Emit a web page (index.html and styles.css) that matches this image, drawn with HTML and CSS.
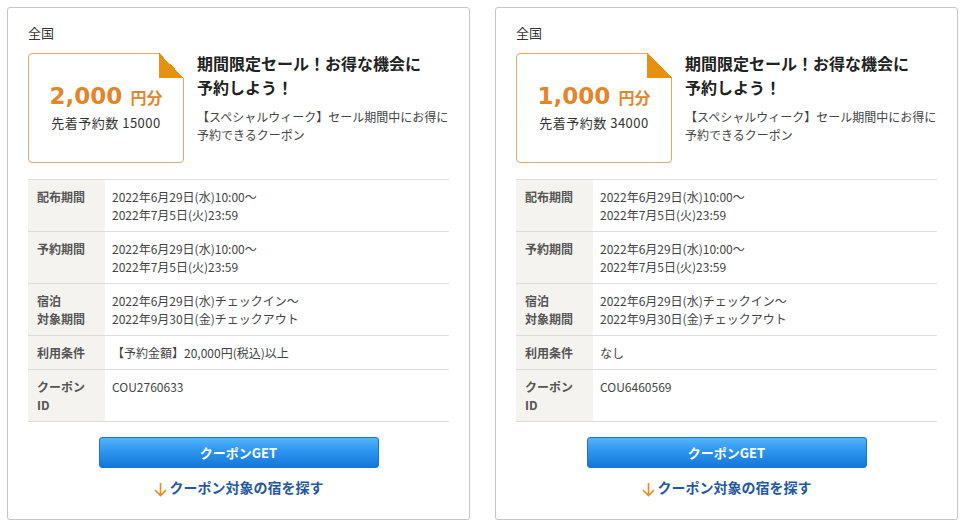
FILE: index.html
```html
<!DOCTYPE html>
<html lang="ja">
<head>
<meta charset="utf-8">
<link rel="stylesheet" href="styles.css">
</head>
<body>
<div class="cards">
  <div class="card">
    <div class="area">全国</div>
    <div class="head">
      <div class="coupon">
        <div class="amount"><span class="num">2,000</span><span class="unit">円分</span></div>
        <div class="count">先着予約数 15000</div>
      </div>
      <div class="info">
        <div class="title">期間限定セール！お得な機会に<br>予約しよう！</div>
        <div class="desc">【スペシャルウィーク】セール期間中にお得に予約できるクーポン</div>
      </div>
    </div>
    <table class="terms">
      <tr><th>配布期間</th><td>2022年6月29日(水)10:00～<br>2022年7月5日(火)23:59</td></tr>
      <tr><th>予約期間</th><td>2022年6月29日(水)10:00～<br>2022年7月5日(火)23:59</td></tr>
      <tr><th>宿泊<br>対象期間</th><td>2022年6月29日(水)チェックイン～<br>2022年9月30日(金)チェックアウト</td></tr>
      <tr><th>利用条件</th><td>【予約金額】20,000円(税込)以上</td></tr>
      <tr><th>クーポン<br>ID</th><td>COU2760633</td></tr>
    </table>
    <div class="actions">
      <button class="get">クーポンGET</button>
      <a class="search" href="#"><svg class="arrow" width="13" height="15" viewBox="0 0 13 15"><path d="M6.5 1v12.5M1 8l5.5 5.5L12 8" fill="none" stroke="#ec8a1d" stroke-width="1.6"/></svg>クーポン対象の宿を探す</a>
    </div>
  </div>
  <div class="card">
    <div class="area">全国</div>
    <div class="head">
      <div class="coupon">
        <div class="amount"><span class="num">1,000</span><span class="unit">円分</span></div>
        <div class="count">先着予約数 34000</div>
      </div>
      <div class="info">
        <div class="title">期間限定セール！お得な機会に<br>予約しよう！</div>
        <div class="desc">【スペシャルウィーク】セール期間中にお得に予約できるクーポン</div>
      </div>
    </div>
    <table class="terms">
      <tr><th>配布期間</th><td>2022年6月29日(水)10:00～<br>2022年7月5日(火)23:59</td></tr>
      <tr><th>予約期間</th><td>2022年6月29日(水)10:00～<br>2022年7月5日(火)23:59</td></tr>
      <tr><th>宿泊<br>対象期間</th><td>2022年6月29日(水)チェックイン～<br>2022年9月30日(金)チェックアウト</td></tr>
      <tr><th>利用条件</th><td>なし</td></tr>
      <tr><th>クーポン<br>ID</th><td>COU6460569</td></tr>
    </table>
    <div class="actions">
      <button class="get">クーポンGET</button>
      <a class="search" href="#"><svg class="arrow" width="13" height="15" viewBox="0 0 13 15"><path d="M6.5 1v12.5M1 8l5.5 5.5L12 8" fill="none" stroke="#ec8a1d" stroke-width="1.6"/></svg>クーポン対象の宿を探す</a>
    </div>
  </div>
</div>
</body>
</html>
```

FILE: styles.css
```css
* { box-sizing: border-box; }
html, body { margin: 0; background: #fff; }
body {
  padding: 7px 0 0 7px;
  font-family: "Noto Sans CJK JP", "Noto Sans", sans-serif;
  color: #333;
}
.cards { display: flex; gap: 25px; }
.card {
  width: 463px;
  height: 513px;
  border: 1px solid #c6c6c6;
  border-radius: 3px;
  padding: 16px 20px 0 20px;
  box-shadow: 0 1px 1px rgba(0,0,0,0.08);
}
.area { font-size: 13px; line-height: 18px; color: #333; height: 29px; }
.head { display: flex; gap: 13px; }
.coupon {
  position: relative;
  width: 156px;
  height: 110px;
  flex: none;
  border: 1px solid #dcaa66;
  border-radius: 4px;
  display: flex;
  flex-direction: column;
  align-items: center;
  padding-top: 26px;
}
.coupon::before {
  content: "";
  position: absolute;
  top: -1px;
  right: -1px;
  width: 25px;
  height: 25px;
  background: linear-gradient(to bottom left, #fff 50%, #e8900f 50%);
}
.amount { color: #e3862a; font-weight: bold; line-height: 32px; white-space: nowrap; }
.num { font-family: "DejaVu Sans", "Noto Sans", sans-serif; font-size: 23px; }
.unit { font-size: 16px; margin-left: 8px; }
.count { font-size: 13px; line-height: 18px; color: #333; letter-spacing: 0.5px; margin-top: 1px; }
.info { width: 256px; margin-top: -2px; }
.title { font-size: 16px; font-weight: bold; line-height: 24px; color: #222; margin-bottom: 9px; }
.desc { font-size: 12px; line-height: 18px; color: #444; }
.terms {
  margin-top: 16px;
  width: 421px;
  border-collapse: collapse;
  border-top: 1px solid #dcdcdc;
  font-size: 12px;
  line-height: 18px;
  color: #444;
}
.terms th, .terms td {
  border-bottom: 1px solid #dcdcdc;
  vertical-align: top;
  text-align: left;
  padding: 8px 8px 7px 9px;
}
.terms th {
  width: 77px;
  background: #f5f3f0;
  font-weight: bold;
  color: #555;
}
.terms td { padding-left: 7px; }
.actions { display: flex; flex-direction: column; align-items: center; padding-top: 15px; }
.get {
  width: 280px;
  height: 31px;
  border: 1px solid #1c74d0;
  border-radius: 3px;
  background: linear-gradient(to bottom, #53b4fa 0%, #2a92ee 50%, #1677d8 100%);
  color: #fff;
  font-family: "Noto Sans CJK JP", sans-serif;
  font-weight: bold;
  font-size: 13px;
  padding: 0;
  cursor: pointer;
}
.search {
  margin-top: 8px;
  display: flex;
  align-items: center;
  gap: 3px;
  font-size: 14px;
  font-weight: bold;
  line-height: 20px;
  color: #2658a0;
  text-decoration: none;
}
.arrow { margin-top: 6px; }
```
